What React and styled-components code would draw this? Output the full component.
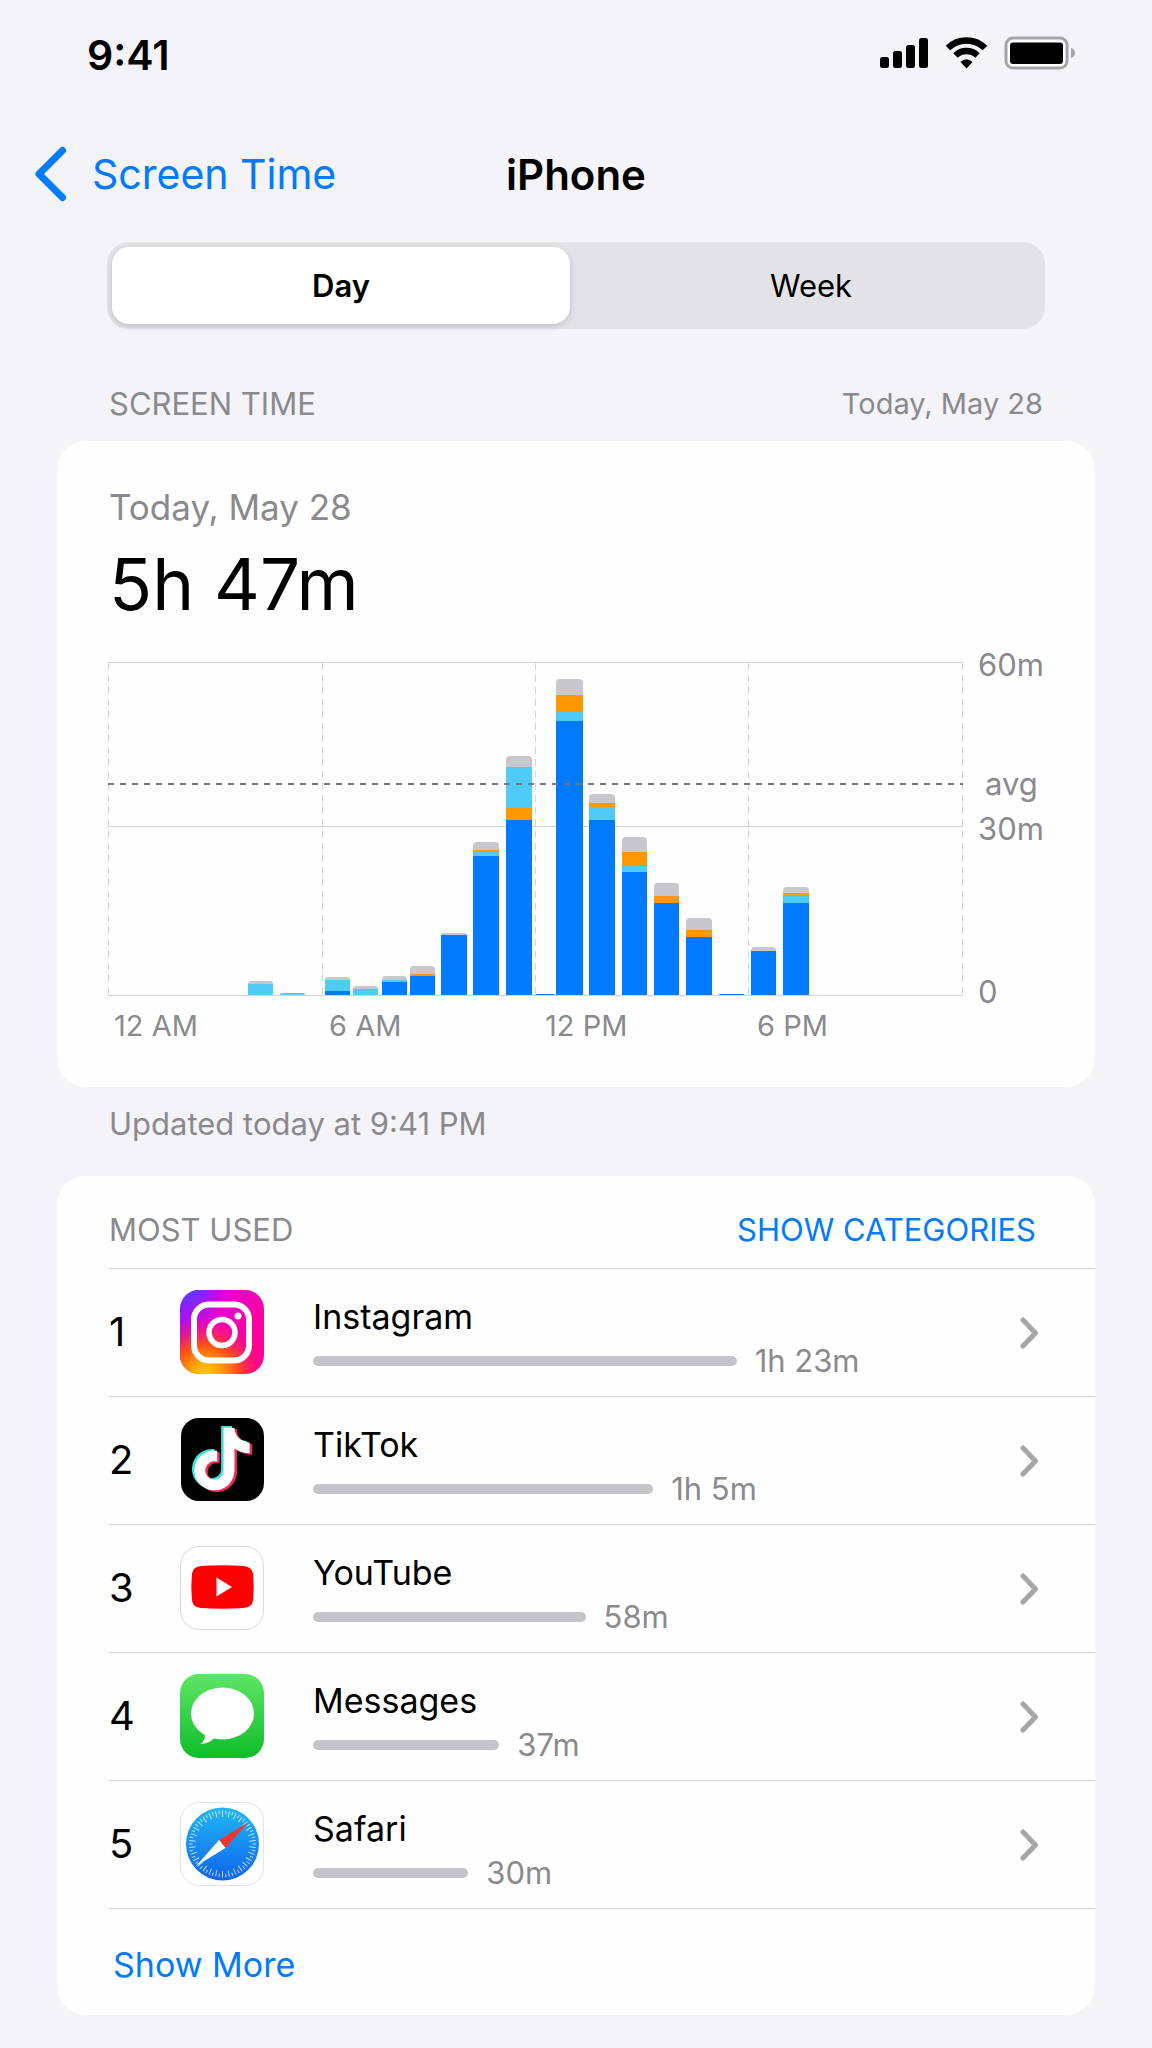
import React, { useState } from 'react';
import styled, { createGlobalStyle } from 'styled-components';
import { FaTiktok } from 'react-icons/fa';

const colors = {
    page: '#f3f3f8',
    card: '#fefefe',
    label: '#8a8a8e',
    blue: '#007aff',
    cyan: '#4fcbf6',
    orange: '#ff9802',
    gray: '#c7c7cc',
    line: '#d3d3d6',
};

const GlobalStyle = createGlobalStyle`
    * {
        box-sizing: border-box;
    }
    body {
        margin: 0;
        background: ${colors.page};
        color: #000;
        font-family: Inter, 'Liberation Sans', sans-serif;
    }
    button {
        border: 0;
        padding: 0;
        background: none;
        font: inherit;
        color: inherit;
        cursor: pointer;
    }
    a {
        color: inherit;
        text-decoration: none;
    }
    h1, h2, p, ol {
        margin: 0;
        padding: 0;
        font-weight: 400;
    }
    svg {
        display: block;
    }
`;

const Page = styled.div`
    padding-bottom: 32px;
`;

const StatusBar = styled.header`
    display: flex;
    align-items: center;
    justify-content: space-between;
    height: 110px;
    padding: 0 76px 0 87px;
`;

const Clock = styled.span`
    font-size: 41px;
    font-weight: 600;
`;

const NavBar = styled.nav`
    display: grid;
    grid-template-columns: 1fr auto 1fr;
    align-items: center;
    height: 128px;
    padding: 0 34px;
`;

const BackLink = styled.a`
    display: flex;
    align-items: center;
    gap: 24px;
    color: ${colors.blue};
    font-size: 41px;
    white-space: nowrap;
`;

const Title = styled.h1`
    font-size: 42px;
    font-weight: 600;
`;

const Segmented = styled.div`
    display: grid;
    grid-template-columns: 1fr 1fr;
    gap: 12px;
    margin: 4px 107px 0;
    padding: 5px;
    height: 87px;
    border-radius: 22px;
    background: #e3e2e7;
`;

const Segment = styled.button`
    border-radius: 17px;
    font-size: 31px;
    font-weight: ${({ $active }) => ($active ? 600 : 400)};
    background: ${({ $active }) => ($active ? '#fff' : 'transparent')};
    box-shadow: ${({ $active }) => ($active ? '0 2px 6px rgba(0, 0, 0, 0.16)' : 'none')};
`;

const Main = styled.main`
    padding: 0 57px;
`;

const SectionHead = styled.div`
    display: flex;
    justify-content: space-between;
    padding: 56px 52px 18px;
    color: ${colors.label};
    font-size: 29px;
    line-height: 38px;
`;

const SectionTitle = styled.h2`
    font-size: 31px;
    line-height: 38px;
    color: ${colors.label};
`;

const Card = styled.section`
    border-radius: 28px;
    background: ${colors.card};
    overflow: hidden;
`;

const Summary = styled.div`
    padding: 44px 52px 42px;
`;

const SummaryDate = styled.p`
    font-size: 35px;
    line-height: 44px;
    color: ${colors.label};
`;

const Total = styled.p`
    margin: 12px 0 14px;
    font-size: 71px;
    line-height: 86px;
`;

const Chart = styled.svg`
    width: 100%;
    height: auto;
    overflow: visible;

    text {
        fill: ${colors.label};
        font-size: 31px;
    }
    .hour {
        font-size: 29px;
    }
`;

const Updated = styled.p`
    padding: 18px 52px 33px;
    color: ${colors.label};
    font-size: 31px;
    line-height: 38px;
`;

const ListHead = styled.div`
    display: flex;
    align-items: center;
    justify-content: space-between;
    height: 92px;
    padding: 16px 59px 0 52px;
`;

const CategoriesButton = styled.button`
    color: ${colors.blue};
    font-size: 31px;
    line-height: 38px;
`;

const AppList = styled.ol`
    list-style: none;
    padding-left: 52px;
`;

const AppRow = styled.a`
    display: grid;
    grid-template-columns: 71px 84px 1fr auto;
    align-items: center;
    height: 128px;
    padding: 0 56px 2px 0;
    border-top: 1px solid ${colors.line};
`;

const Rank = styled.span`
    font-size: 40px;
`;

const AppInfo = styled.div`
    padding: 12px 16px 0 49px;
`;

const AppName = styled.div`
    margin-bottom: 2px;
    font-size: 34px;
    line-height: 44px;
`;

const Usage = styled.div`
    display: flex;
    align-items: center;
    gap: 18px;
    color: ${colors.label};
    font-size: 31px;
    line-height: 40px;
    white-space: nowrap;
`;

const UsageBar = styled.div`
    height: 10px;
    border-radius: 5px;
    background: #c5c5c9;
`;

const Footer = styled.div`
    display: flex;
    align-items: center;
    height: 107px;
    margin-left: 52px;
    padding-top: 4px;
    border-top: 1px solid ${colors.line};
`;

const MoreButton = styled.button`
    padding-left: 4px;
    color: ${colors.blue};
    font-size: 34px;
`;

// height is measured up from the axis, segments go from bottom to top
const bars = [
    { x: 140, w: 25, parts: [['cyan', 11], ['gray', 3]] },
    { x: 172, w: 25, parts: [['cyan', 2]] },
    { x: 217, w: 25, parts: [['blue', 4], ['cyan', 11], ['gray', 3]] },
    { x: 245, w: 25, parts: [['cyan', 6], ['gray', 3]] },
    { x: 274, w: 25, parts: [['blue', 13], ['cyan', 2], ['gray', 4]] },
    { x: 302, w: 25, parts: [['blue', 19], ['orange', 2], ['gray', 8]] },
    { x: 333, w: 26, parts: [['blue', 60], ['gray', 2]] },
    { x: 365, w: 26, parts: [['blue', 139], ['cyan', 4], ['orange', 2], ['gray', 8]] },
    { x: 398, w: 26, parts: [['blue', 175], ['orange', 12], ['cyan', 41], ['gray', 11]] },
    { x: 428, w: 19, parts: [['blue', 1]] },
    { x: 448, w: 27, parts: [['blue', 274], ['cyan', 9], ['orange', 17], ['gray', 16]] },
    { x: 481, w: 26, parts: [['blue', 175], ['cyan', 13], ['orange', 4], ['gray', 9]] },
    { x: 514, w: 25, parts: [['blue', 123], ['cyan', 6], ['orange', 14], ['gray', 15]] },
    { x: 546, w: 25, parts: [['blue', 92], ['orange', 7], ['gray', 13]] },
    { x: 578, w: 26, parts: [['blue', 58], ['orange', 7], ['gray', 12]] },
    { x: 611, w: 25, parts: [['blue', 1]] },
    { x: 643, w: 25, parts: [['blue', 44], ['gray', 4]] },
    { x: 675, w: 26, parts: [['blue', 92], ['cyan', 7], ['orange', 3], ['gray', 6]] },
];

const AXIS = 354;

const Bar = ({ x, w, parts }) => {
    let top = AXIS;
    return parts.map(([color, h], i) => {
        top -= h;
        const last = i === parts.length - 1;
        const r = last ? Math.min(4, h) : 0;
        return (
            <path
                key={i}
                fill={colors[color]}
                d={`M${x} ${top + h}v${r - h}q0 ${-r} ${r} ${-r}h${w - 2 * r}q${r} 0 ${r} ${r}v${h - r}z`}
            />
        );
    });
};

const UsageChart = () => (
    <Chart viewBox="1 0 934 404" role="img" aria-label="Screen time by hour">
        {[21.5, 185.5, 354.5].map((y) => (
            <path key={y} d={`M0 ${y}H855`} stroke={colors.line} />
        ))}
        {[0.5, 214.5, 427.5, 640.5, 854.5].map((x) => (
            <path key={x} d={`M${x} 22V358`} stroke={colors.line} strokeDasharray="7 5" />
        ))}
        {bars.map((bar) => (
            <Bar key={bar.x} {...bar} />
        ))}
        <path d="M0 143H855" stroke="#77777b" strokeWidth="2" strokeDasharray="6 6" />
        <text className="hour" x="6" y="395">12 AM</text>
        <text className="hour" x="221" y="395">6 AM</text>
        <text className="hour" x="437" y="395">12 PM</text>
        <text className="hour" x="649" y="395">6 PM</text>
        <text x="870" y="35">60m</text>
        <text x="877" y="154">avg</text>
        <text x="870" y="199">30m</text>
        <text x="870" y="362">0</text>
    </Chart>
);

const StatusIcons = () => (
    <svg width="196" height="40" viewBox="0 0 196 40" aria-hidden="true">
        <rect x="0" y="22" width="9" height="11" rx="2.5" />
        <rect x="13" y="16" width="9" height="17" rx="2.5" />
        <rect x="26" y="10" width="9" height="23" rx="2.5" />
        <rect x="39" y="3" width="9" height="30" rx="2.5" />
        <g fill="none" stroke="#000" strokeWidth="6.5">
            <path d="M68 13A26.5 26.5 0 0 1 105 13" />
            <path d="M75.5 20.5A16 16 0 0 1 97.5 20.5" />
        </g>
        <path d="M80.5 27Q86.5 21.5 92.5 27L86.5 33.5z" />
        <rect x="126" y="3" width="61" height="30" rx="7" fill="#fff" stroke="#a5a5a9" strokeWidth="3" />
        <rect x="130" y="7.5" width="53" height="21.5" rx="3" />
        <path d="M191 13Q195 14 195 18T191 23z" fill="#a5a5a9" />
    </svg>
);

const BackIcon = () => (
    <svg width="34" height="58" viewBox="0 0 34 58" fill="none" aria-hidden="true">
        <path d="M28.5 5.5L5 29L28.5 52.5" stroke={colors.blue} strokeWidth="7" strokeLinecap="round" strokeLinejoin="round" />
    </svg>
);

const Chevron = () => (
    <svg width="20" height="34" viewBox="0 0 20 34" fill="none" aria-hidden="true">
        <path d="M4 5L16.5 18L4 31" stroke="#a6a6a9" strokeWidth="5" strokeLinecap="round" strokeLinejoin="round" />
    </svg>
);

const InstagramIcon = () => (
    <svg width="84" height="84" viewBox="0 0 84 84" aria-hidden="true">
        <defs>
            <linearGradient id="ig-base" x1="0" y1="0" x2="1" y2="0.5">
                <stop offset="0" stopColor="#8a1cff" />
                <stop offset="0.45" stopColor="#ea00d0" />
                <stop offset="1" stopColor="#ff0098" />
            </linearGradient>
            <radialGradient id="ig-warm" cx="0.3" cy="1.05" r="0.75">
                <stop offset="0" stopColor="#ffd600" />
                <stop offset="0.25" stopColor="#ffa800" />
                <stop offset="0.55" stopColor="#ff4a1c" />
                <stop offset="1" stopColor="#ff0080" stopOpacity="0" />
            </radialGradient>
            <radialGradient id="ig-cool" cx="0.12" cy="0" r="0.45">
                <stop offset="0" stopColor="#5340ff" />
                <stop offset="1" stopColor="#a010ff" stopOpacity="0" />
            </radialGradient>
        </defs>
        <rect width="84" height="84" rx="19" fill="url(#ig-base)" />
        <rect width="84" height="84" rx="19" fill="url(#ig-warm)" />
        <rect width="84" height="84" rx="19" fill="url(#ig-cool)" />
        <g fill="none" stroke="#fff">
            <rect x="14" y="14.5" width="55" height="56" rx="15" strokeWidth="6" />
            <circle cx="42" cy="42.5" r="13" strokeWidth="5.5" />
        </g>
        <circle cx="58" cy="26" r="3.5" fill="#fff" />
    </svg>
);

const TikTokIcon = () => (
    <svg width="84" height="84" viewBox="0 0 84 84" aria-hidden="true">
        <rect x="1" width="83" height="83" rx="18" />
        <FaTiktok x="8" y="8" size="63" color="#3ee3df" />
        <FaTiktok x="13" y="11" size="63" color="#f22a5c" />
        <FaTiktok x="10.5" y="9.5" size="63" color="#fff" />
    </svg>
);

const YouTubeIcon = () => (
    <svg width="84" height="84" viewBox="0 0 84 84" aria-hidden="true">
        <rect x="0.5" y="0.5" width="83" height="83" rx="19" fill="#fff" stroke="#d9d9dc" />
        <path
            fill="#f00"
            d="M21 20Q42 18.500 63 20Q72 20.500 73 27.500Q74.500 41.500 73 54.500Q72 61.500 63 62Q42 63.500 21 62Q13 61.500 12 54.500Q10.500 41.500 12 27.500Q13 20.500 21 20z"
        />
        <path d="M36.5 31.5L52 41L36.5 50.5z" fill="#fff" />
    </svg>
);

const MessagesIcon = () => (
    <svg width="84" height="84" viewBox="0 0 84 84" aria-hidden="true">
        <defs>
            <linearGradient id="msg" x1="0" y1="0" x2="0" y2="1">
                <stop offset="0" stopColor="#5fe566" />
                <stop offset="1" stopColor="#0dbd29" />
            </linearGradient>
        </defs>
        <rect width="84" height="84" rx="19" fill="url(#msg)" />
        <ellipse cx="42.5" cy="39.5" rx="31.5" ry="26" fill="#fff" />
        <path d="M25 58Q26 66 20.5 70Q29 70 35.5 63z" fill="#fff" />
    </svg>
);

const ticks = Array.from({ length: 60 }, (_, i) => i * 6);

const SafariIcon = () => (
    <svg width="84" height="84" viewBox="0 0 84 84" aria-hidden="true">
        <defs>
            <linearGradient id="safari" x1="0" y1="0" x2="0" y2="1">
                <stop offset="0" stopColor="#1fb8f3" />
                <stop offset="1" stopColor="#1063f0" />
            </linearGradient>
        </defs>
        <rect x="0.5" y="0.5" width="83" height="83" rx="19" fill="#fff" stroke="#e3e3e6" />
        <circle cx="42.5" cy="42" r="36.5" fill="url(#safari)" />
        <g stroke="#fff" strokeOpacity="0.75">
            {ticks.map((deg) => (
                <path
                    key={deg}
                    d={deg % 12 ? 'M42.5 8.500v3.500' : 'M42.5 8.500v6.500'}
                    transform={`rotate(${deg} 42.5 42)`}
                />
            ))}
        </g>
        <path d="M68 20.5L39 38L45.5 46z" fill="#f3352f" />
        <path d="M16 64L39 38L45.5 46z" fill="#fff" />
    </svg>
);

const apps = [
    { name: 'Instagram', time: '1h 23m', share: 61.4, Icon: InstagramIcon },
    { name: 'TikTok', time: '1h 5m', share: 49.3, Icon: TikTokIcon },
    { name: 'YouTube', time: '58m', share: 39.5, Icon: YouTubeIcon },
    { name: 'Messages', time: '37m', share: 27, Icon: MessagesIcon },
    { name: 'Safari', time: '30m', share: 22.5, Icon: SafariIcon },
];

const App = () => {
    const [range, setRange] = useState('Day');

    return (
        <Page>
            <GlobalStyle />
            <StatusBar>
                <Clock>9:41</Clock>
                <StatusIcons />
            </StatusBar>
            <NavBar>
                <BackLink href="#screen-time">
                    <BackIcon />
                    Screen Time
                </BackLink>
                <Title>iPhone</Title>
            </NavBar>
            <Segmented>
                {['Day', 'Week'].map((name) => (
                    <Segment
                        key={name}
                        type="button"
                        $active={range === name}
                        aria-pressed={range === name}
                        onClick={() => setRange(name)}
                    >
                        {name}
                    </Segment>
                ))}
            </Segmented>
            <Main>
                <SectionHead>
                    <SectionTitle>SCREEN TIME</SectionTitle>
                    <span>Today, May 28</span>
                </SectionHead>
                <Card>
                    <Summary>
                        <SummaryDate>Today, May 28</SummaryDate>
                        <Total>5h 47m</Total>
                        <UsageChart />
                    </Summary>
                </Card>
                <Updated>Updated today at 9:41 PM</Updated>
                <Card>
                    <ListHead>
                        <SectionTitle>MOST USED</SectionTitle>
                        <CategoriesButton type="button">SHOW CATEGORIES</CategoriesButton>
                    </ListHead>
                    <AppList>
                        {apps.map(({ name, time, share, Icon }, i) => (
                            <li key={name}>
                                <AppRow href={`#${name.toLowerCase()}`}>
                                    <Rank>{i + 1}</Rank>
                                    <Icon />
                                    <AppInfo>
                                        <AppName>{name}</AppName>
                                        <Usage>
                                            <UsageBar style={{ width: `${share}%` }} />
                                            {time}
                                        </Usage>
                                    </AppInfo>
                                    <Chevron />
                                </AppRow>
                            </li>
                        ))}
                    </AppList>
                    <Footer>
                        <MoreButton type="button">Show More</MoreButton>
                    </Footer>
                </Card>
            </Main>
        </Page>
    );
};

export default App;
